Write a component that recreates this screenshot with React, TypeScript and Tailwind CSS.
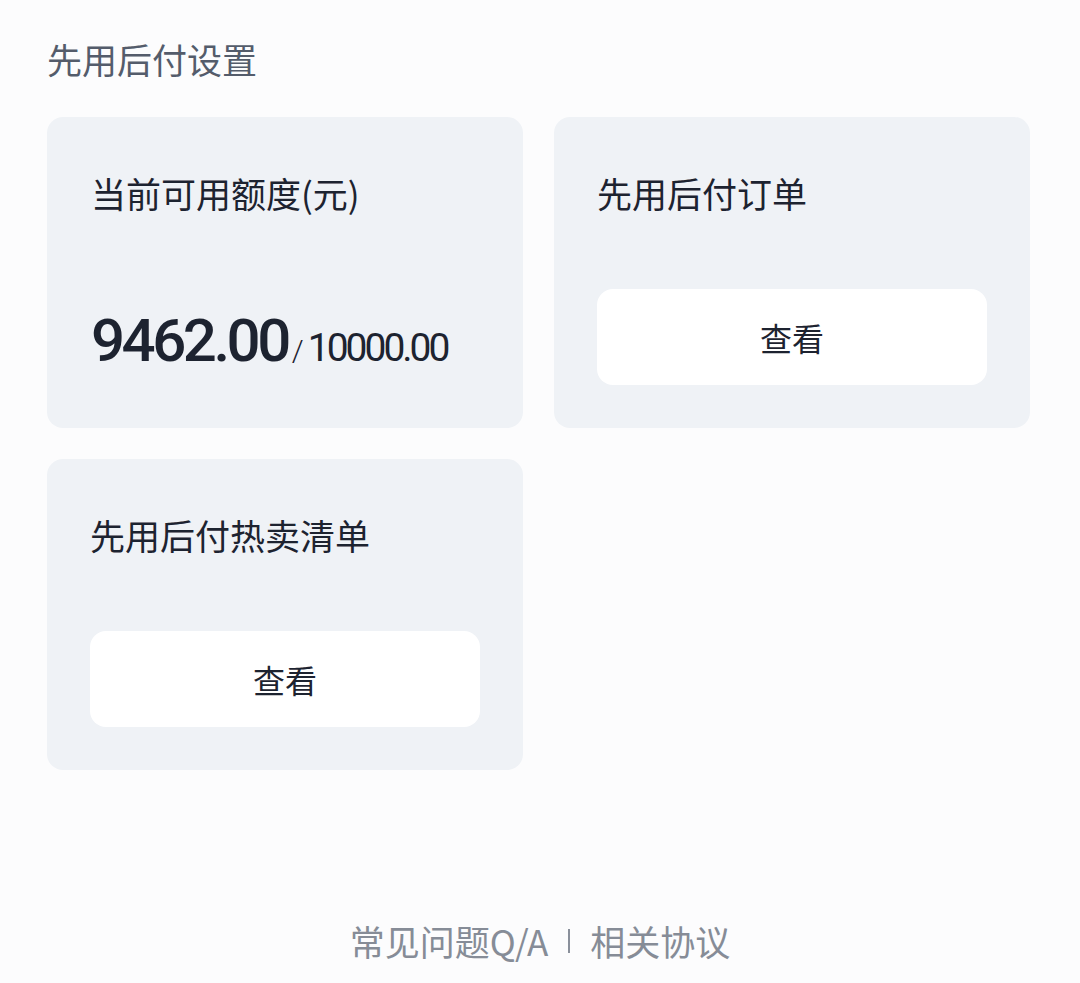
const cjk = { fontFamily: '"Noto Sans CJK SC", "Noto Sans", sans-serif' }
const num = { fontFamily: 'Roboto, "Noto Sans", sans-serif' }

const ViewButton = () => (
  <button className="w-full h-[96px] rounded-[16px] bg-white text-[32px] text-[#1d2330] flex items-center justify-center">
    查看
  </button>
)

const App = () => {
  return (
    <div className="w-[1080px] h-[983px] bg-[#fcfcfd] flex flex-col" style={cjk}>
      <h1 className="pl-[47px] pt-[37px] text-[35px] leading-[44px] text-[#545c6b]">先用后付设置</h1>

      <div className="grid grid-cols-2 gap-x-[31px] gap-y-[31px] pl-[47px] pr-[50px] mt-[36px]">
        {/* available credit */}
        <div className="h-[311px] rounded-[16px] bg-[#eff2f6] px-[44px] pt-[54px]">
          <div className="text-[35px] leading-[44px] text-[#1d2330]">当前可用额度(元)</div>
          <div className="mt-[94px] flex items-baseline text-[#1d2330]" style={num}>
            <span className="text-[60px] leading-[64px] font-medium tracking-[-3.5px]">9462.00</span>
            <span className="text-[30px] ml-[4px] mr-[4px] font-light">/</span>
            <span className="text-[39px] tracking-[-3px]">10000.00</span>
          </div>
        </div>

        {/* orders */}
        <div className="h-[311px] rounded-[16px] bg-[#eff2f6] px-[43px] pt-[54px]">
          <div className="text-[35px] leading-[44px] text-[#1d2330]">先用后付订单</div>
          <div className="mt-[74px]">
            <ViewButton />
          </div>
        </div>

        {/* hot list */}
        <div className="h-[311px] rounded-[16px] bg-[#eff2f6] px-[43px] pt-[54px]">
          <div className="text-[35px] leading-[44px] text-[#1d2330]">先用后付热卖清单</div>
          <div className="mt-[74px]">
            <ViewButton />
          </div>
        </div>
      </div>

      <div className="mt-auto mb-[20px] flex items-center justify-center text-[35px] leading-[44px] text-[#868c97]">
        <span>常见问题Q/A</span>
        <span className="mx-[20px] w-[2px] h-[24px] bg-[#8a909b]" />
        <span>相关协议</span>
      </div>
    </div>
  )
}

export default App
